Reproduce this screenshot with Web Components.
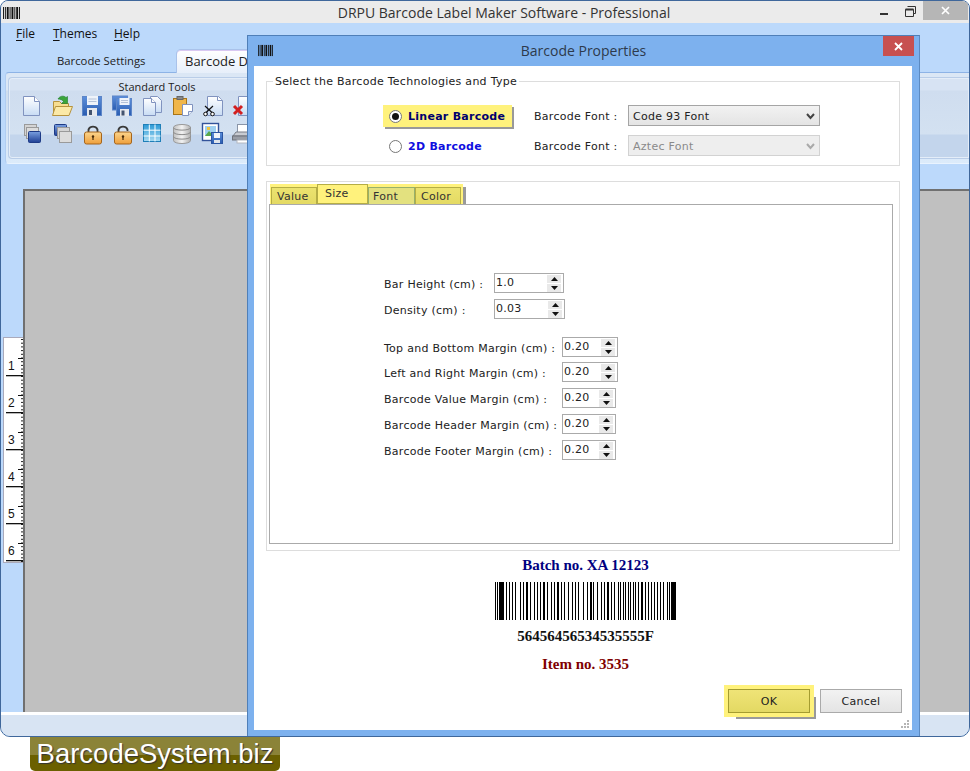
<!DOCTYPE html>
<html lang="en"><head><meta charset="utf-8"><title>DRPU Barcode Label Maker Software</title>
<style>html,body{margin:0;padding:0;background:#fff}body{width:970px;height:771px;overflow:hidden;font-family:"DejaVu Sans",sans-serif}</style>
</head><body>
<app-window>
  <menu-bar></menu-bar>
  <tab-row></tab-row>
  <tool-ribbon></tool-ribbon>
  <work-area></work-area>
  <prop-dialog>
    <group-box slot="top" legend="Select the Barcode Technologies and Type"><tech-picker></tech-picker></group-box>
    <size-tabs slot="tabs">
      <spin-row label="Bar Height (cm) :" value="1.0" lw="110" w="70"></spin-row>
      <spin-row label="Density (cm) :" value="0.03" lw="110" w="71"></spin-row>
      <spin-row label="Top and Bottom Margin (cm) :" value="0.20" lw="178" w="56" style="margin-top:12px"></spin-row>
      <spin-row label="Left and Right Margin (cm) :" value="0.20" lw="178" w="56" style="margin-top:-1px"></spin-row>
      <spin-row label="Barcode Value Margin (cm) :" value="0.20" lw="178" w="54"></spin-row>
      <spin-row label="Barcode Header Margin (cm) :" value="0.20" lw="178" w="54"></spin-row>
      <spin-row label="Barcode Footer Margin (cm) :" value="0.20" lw="178" w="54"></spin-row>
    </size-tabs>
    <barcode-preview slot="preview"></barcode-preview>
  </prop-dialog>
</app-window>
<water-mark>BarcodeSystem.biz</water-mark>
<script>
const barLogo=(w,h)=>{const b=[[0,1],[2,1],[4,2],[7,1],[9,2],[12,1],[14,2],[17,1]];return `<svg width="${w}" height="${h}" viewBox="0 0 18 14" preserveAspectRatio="none" style="display:block">${b.map(a=>`<rect x="${a[0]}" y="1" width="${a[1]}" height="12" fill="#111"/>`).join('')}</svg>`};
function def(name,html,init){customElements.define(name,class extends HTMLElement{constructor(){super();const s=this.attachShadow({mode:'open'});s.innerHTML=typeof html==='function'?html(this):html;}connectedCallback(){if(init&&!this._i){this._i=1;init(this)}}})}

def('app-window',`<style>
:host{display:block;position:relative;box-sizing:border-box;width:970px;height:737px;border:1px solid #3f679b;border-radius:8px 8px 10px 10px;background:#bcd9fb;overflow:hidden}
.title{height:22px;background:#ebebeb;display:flex;align-items:center;position:relative;font:14px/20px "Open Sans",sans-serif;color:#333;justify-content:center;padding:2px 0 0 38px;box-sizing:border-box}
.logo{position:absolute;left:2px;top:5px}
.ctl{position:absolute;right:0;top:0;display:flex;height:19px;align-items:flex-start}
.ctl i{display:block;position:relative}
.min{width:8px;height:2px;background:#333;position:absolute!important;left:-43px;top:12px}
.res{position:absolute!important;left:-18px;top:5px}
.x{width:45px;height:19px;background:#b6b6b6;margin-right:1px;display:flex!important;align-items:center;justify-content:center}
</style>
<div class="title"><span class="logo">${barLogo(17,14)}</span>DRPU Barcode Label Maker Software - Professional
<div class="ctl"><i class="min"></i><i class="res"><svg width="11" height="11" style="display:block"><path d="M2.5 .5h8v7h-2M.5 3.5h8v7h-8z" fill="none" stroke="#333"/><path d="M.5 3.5h8" stroke="#333" stroke-width="2"/></svg></i><i class="x"><svg width="9" height="9"><path d="M1 1l7 7M8 1l-7 7" stroke="#fff" stroke-width="1.7"/></svg></i></div></div>
<slot></slot>`);

def('menu-bar',`<style>
:host{display:flex;height:26px;align-items:center;font:12px "Open Sans",sans-serif;color:#111;padding:0 0 6px 15px;box-sizing:border-box}
span{display:block}u{text-decoration:underline;text-underline-offset:2px}
</style><span style="width:37px"><u>F</u>ile</span><span style="width:61px"><u>T</u>hemes</span><span><u>H</u>elp</span>`);

def('tab-row',`<style>
:host{display:flex;height:24px;font:11.300px "Open Sans",sans-serif;color:#222;box-sizing:border-box;padding-left:56px;align-items:flex-end;position:relative;margin-bottom:-1px}
.a{width:119px;height:22px;line-height:20px}
.b{height:24px;width:200px;box-sizing:border-box;border:1px solid #a9c2ea;border-bottom:0;border-radius:5px 5px 0 0;background:linear-gradient(#fff,#e7effa);padding-left:8px;line-height:23px;font-size:13px;white-space:nowrap;box-shadow:inset 0 1px #d9c8f2}
</style><span class="a">Barcode Settings</span><span class="b">Barcode Designing</span>`);

const lockBody=`<rect x=".5" y="8.500" width="17" height="12" rx="2" fill="url(#o)" stroke="#a5651c"/><circle cx="9" cy="13" r="1.200" fill="#4a2c08"/><path d="M9 13v3.500" stroke="#4a2c08" stroke-width="1.200"/>`;
const ico={
doc:`<path d="M1.5 1.5h11l5 5v14h-16z" fill="url(#w)" stroke="#8093bf"/><path d="M12.5 1.5v5h5" fill="#fff" stroke="#8093bf"/>`,
open:`<path d="M1.5 19V6.500h6l2 2h7v4" fill="#f7dd90" stroke="#b6933d"/><path d="M.5 20.500l3-9h17l-3.500 9z" fill="#fbe9a7" stroke="#b6933d"/><path d="M6 4c2-3.500 6-3.500 8-1.500l1.500-1v7h-6l2-2c-1-1.500-3-2.500-5.500-2.500z" fill="#3aa53a" stroke="#1e7a2c" stroke-width=".6"/>`,
save:`<rect x=".5" y="1.500" width="19" height="19" fill="url(#b)" stroke="#5d86c8"/><rect x="5" y="1" width="11" height="9" fill="#eef3fa"/><path d="M6.500 4h8M6.500 6.500h8" stroke="#b4c2d8"/><rect x="5" y="13" width="10" height="8" fill="#e6e9ee"/><rect x="7" y="15" width="3" height="5" fill="#44546f"/>`,
saveall:`<rect x=".5" y="1" width="15" height="14" fill="url(#b)" stroke="#5d86c8"/><rect x="4.500" y="3.500" width="15" height="17" fill="url(#b)" stroke="#5d86c8"/><rect x="7.500" y="3" width="10" height="7" fill="#eef3fa"/><path d="M9 5.500h7M9 7.500h7" stroke="#b4c2d8"/><rect x="8" y="14" width="9" height="7" fill="#e6e9ee"/><rect x="9.500" y="15.500" width="3" height="5" fill="#44546f"/>`,
copy:`<path d="M8.500 1.500h7l4 4v12h-11z" fill="url(#w)" stroke="#8093bf"/><path d="M1.500 3.500h8l4 4v13h-12z" fill="url(#w)" stroke="#8093bf"/><path d="M9.500 3.500v4h4" fill="#fff" stroke="#8093bf"/>`,
paste:`<rect x="1.500" y="3.500" width="13" height="16" fill="#f0b64a" stroke="#a77418"/><rect x="5" y="1.500" width="6" height="3" fill="#8a8a8a" stroke="#666"/><path d="M10.500 9.500h10v7l-4 4h-6z" fill="#fff" stroke="#8093bf"/><path d="M16.500 20.500v-4h4" fill="#e4ebf5" stroke="#8093bf"/>`,
cut:`<path d="M5.500 1.500h11l4 4v15h-15z" fill="url(#w)" stroke="#8093bf"/><path d="M15.500 1.500v4h5" fill="#fff" stroke="#8093bf"/><path d="M3 11l7.500 7M11 11l-7.500 7" stroke="#111" stroke-width="1.200"/><circle cx="3.500" cy="19" r="1.800" fill="#fff" stroke="#111"/><circle cx="10.500" cy="19" r="1.800" fill="#fff" stroke="#111"/>`,
del:`<path d="M6.500 1.500h13v19h-13z" fill="url(#w)" stroke="#8093bf"/><path d="M2 11l8 8M10 11l-8 8" stroke="#d21f1f" stroke-width="3"/>`,
front:`<rect x="2.500" y="1.500" width="12" height="11" fill="#d4d4d4" stroke="#9a9a9a"/><rect x="4.500" y="4.500" width="12" height="11" fill="#dcdcdc" stroke="#9a9a9a"/><rect x="6.500" y="8.500" width="12" height="11" rx="1" fill="url(#b2)" stroke="#1d3a86"/>`,
back:`<rect x="2.500" y="1.500" width="12" height="11" rx="1" fill="url(#b2)" stroke="#1d3a86"/><rect x="5.500" y="4.500" width="12" height="11" fill="#d4d4d4" stroke="#9a9a9a"/><rect x="7.500" y="8.500" width="12" height="11" fill="#dcdcdc" stroke="#9a9a9a"/>`,
lock:`<g transform="translate(2 .5)"><path d="M4.500 9V6a5 5 0 0 1 9 0v3" fill="none" stroke="#3a3a3a" stroke-width="1.800"/>${lockBody}</g>`,
unlock:`<g transform="translate(2 .5)"><path d="M4.500 9V6a5 5 0 0 1 9 0v1.500" fill="none" stroke="#3a3a3a" stroke-width="1.800"/>${lockBody}</g>`,
grid:`<rect x="1.500" y="1.500" width="17" height="17" fill="url(#g)" stroke="#1f7fb8"/><path d="M7.300 1.500v17M13 1.500v17M1.500 7.200h17M1.500 13h17" stroke="#fff"/>`,
db:`<path d="M1.500 4.500c0-4 17-4 17 0v13c0 4-17 4-17 0z" fill="url(#s)" stroke="#999"/><path d="M1.500 4.500c0 3.500 17 3.500 17 0M1.500 9c0 3.500 17 3.500 17 0M1.500 13.500c0 3.500 17 3.500 17 0" fill="none" stroke="#8c8c8c"/>`,
pic:`<rect x=".5" y=".5" width="16" height="17" fill="#fff" stroke="#33539a" stroke-width="1.400"/><rect x="3" y="3" width="11" height="10" fill="#9fd0f0"/><path d="M3 13l4-5 3 3 2-2 2 4z" fill="#5aa84a"/><rect x="5" y="4" width="3" height="3" fill="#f2c53d"/><rect x="9.500" y="9.500" width="11" height="11" fill="url(#b)" stroke="#2a55a2"/><rect x="12" y="10" width="6" height="5" fill="#eef3fa"/><rect x="12" y="17" width="6" height="3" fill="#dfe4ea"/>`,
print:`<rect x="5.500" y="1.500" width="12" height="8" fill="#fff" stroke="#8a95a8"/><path d="M1 13l3-4h16v4z" fill="#c9ccd2" stroke="#7a7f88"/><rect x=".5" y="13" width="21" height="4" fill="#9a9ea6" stroke="#6f737b"/><rect x="5" y="17" width="13" height="3" fill="#fff" stroke="#b4b8c0"/>`
};
const defs=`<defs><linearGradient id="w" x1="0" y1="0" x2="0" y2="1"><stop offset="0" stop-color="#fff"/><stop offset="1" stop-color="#c8dcf4"/></linearGradient><linearGradient id="b" x1="0" y1="0" x2="0" y2="1"><stop offset="0" stop-color="#5c8fdb"/><stop offset="1" stop-color="#2a5cb0"/></linearGradient><linearGradient id="b2" x1="0" y1="0" x2="0" y2="1"><stop offset="0" stop-color="#7aa0e0"/><stop offset="1" stop-color="#1f3f94"/></linearGradient><linearGradient id="o" x1="0" y1="0" x2="0" y2="1"><stop offset="0" stop-color="#fbd58d"/><stop offset="1" stop-color="#ef9f3a"/></linearGradient><linearGradient id="g" x1="0" y1="0" x2="0" y2="1"><stop offset="0" stop-color="#2d9ad6"/><stop offset="1" stop-color="#a8daf2"/></linearGradient><linearGradient id="s" x1="0" y1="0" x2="1" y2="0"><stop offset="0" stop-color="#c0c0c0"/><stop offset=".5" stop-color="#f2f2f2"/><stop offset="1" stop-color="#b0b0b0"/></linearGradient></defs>`;
def('tool-icon',el=>`<style>:host{display:block;width:22px;height:22px}svg{display:block;overflow:visible}</style><svg width="22" height="22" viewBox="0 0 22 22">${defs}${ico[el.getAttribute('name')]||''}</svg>`);

def('tool-ribbon',`<style>
:host{display:block;box-sizing:border-box;height:92px;margin-left:4px;border-top:1px solid #8db3e6;border-left:1px solid #b0cdf2;border-bottom:1px solid #e9f3fe;border-radius:4px 0 0 4px;background:linear-gradient(#dbe7f5 0,#dbe7f5 17px,#cfdeee 18px,#d6e5f5 60px,#dcebfa 100%);padding:4px 0 3px 2px}
.g{height:82px;box-sizing:border-box;border:1px solid #b9cde8;border-right:0;border-radius:4px 0 0 4px;box-shadow:inset 0 0 0 1px #e4edf8;position:relative;background:linear-gradient(#d7e3f3 0,#d7e3f3 12px,#cfddef 13px,#d3e1f1 56px,#c3d5ec 57px,#c3d5ec 100%);}
.t{font:11px/14px "Open Sans",sans-serif;color:#222;text-align:center;width:296px;padding-top:2px;height:15px}
.i{display:grid;grid-template-columns:repeat(8,30px);grid-auto-rows:22px;row-gap:6px;margin-left:13px;width:240px}
</style><div class="g"><div class="t">Standard Tools</div><div class="i">
${['doc','open','save','saveall','copy','paste','cut','del','front','back','lock','unlock','grid','db','pic','print'].map(n=>`<tool-icon name="${n}"></tool-icon>`).join('')}
</div></div>`);

def('work-area',()=>{let t='';for(let i=0;i<61;i++){const y=1+i*3.7;if(y>224)break;t+=`<rect x="17" y="${y.toFixed(1)}" width="3" height="1" fill="#222"/>`}
let n='';for(let k=1;k<=6;k++){const y=37*k;n+=`<rect x="2" y="${y}" width="18" height="1.300" fill="#111"/><rect x="14" y="${y-17}" width="6" height="1" fill="#111"/><text x="4" y="${y-5}" font-family="Liberation Sans" font-size="12" fill="#111">${k}</text>`}
return `<style>
:host{display:flex;flex-direction:column;height:573px;margin-top:0}
.m{display:flex;flex:1;padding-top:25px}
.r{width:22px;padding-left:2px;padding-top:148px;box-sizing:border-box}
.rr{width:20px;height:226px;box-sizing:border-box;border:1px solid #aab;border-right:0;background:#fff}
.c{flex:1;background:#c0c0c0;border-top:2px solid #707070;border-left:2px solid #707070}
.s{height:3px;background:#fff}.f{height:22px;background:#d8e4f3}
svg{display:block}
</style><div class="m"><div class="r"><div class="rr"><svg width="20" height="224">${t}${n}</svg></div></div><div class="c"></div></div><div class="s"></div><div class="f"></div>`});

def('prop-dialog',`<style>
:host{display:block;position:absolute;left:246px;top:34px;width:673px;height:702px;box-sizing:border-box;border:1px solid #4f7fb8;border-right-color:#5b8ac2;background:#7db1ee;padding:30px 7px 6px 6px}
.h{position:absolute;left:0;right:0;top:0;height:30px;font:14px/30px "Open Sans",sans-serif;color:#2d3a4c;text-align:center;box-sizing:border-box}
.lg{position:absolute;left:10px;top:8px}
.cl{position:absolute;right:5px;top:0;width:31px;height:20px;background:#c75050;display:flex;align-items:center;justify-content:center}
.b{background:#fff;height:100%;box-sizing:border-box;padding:15px 12px 0;position:relative;display:flex;flex-direction:column}
.foot{display:flex;justify-content:flex-end;gap:10px;margin-top:14px;margin-right:-2px}
.ok,.cn{display:block;box-sizing:border-box;width:82px;height:24px;font:11px/23px "DejaVu Sans",sans-serif;letter-spacing:.27px;text-align:center;color:#222}
.ok{border:1px solid #a49c30;background:linear-gradient(#efe477,#e3d963);outline:4px solid #fff27c;box-shadow:7px 7px 0 -1px #9a9a9a}
.cn{border:1px solid #aaa;background:linear-gradient(#f2f2f2,#e4e4e4)}
.grip{position:absolute;right:2px;bottom:2px}
</style>
<div class="h"><span class="lg">${barLogo(15,13)}</span>Barcode Properties<span class="cl"><svg width="9" height="9"><path d="M1 1l7 7M8 1l-7 7" stroke="#fff" stroke-width="1.800"/></svg></span></div>
<div class="b"><slot name="top"></slot><slot name="tabs"></slot><slot name="preview"></slot>
<div class="foot"><span class="ok">OK</span><span class="cn">Cancel</span></div>
<svg class="grip" width="9" height="8"><g fill="#b5b5b5"><rect x="6" y="0" width="2" height="2"/><rect x="3" y="3" width="2" height="2"/><rect x="6" y="3" width="2" height="2"/><rect x="0" y="6" width="2" height="2"/><rect x="3" y="6" width="2" height="2"/><rect x="6" y="6" width="2" height="2"/></g></svg></div>`);

def('group-box',el=>`<style>
:host{display:block;box-sizing:border-box;height:85px;border:1px solid #ddd;position:relative;font:11px "DejaVu Sans",sans-serif;letter-spacing:.27px;color:#222}
.l{position:absolute;left:6px;top:-7px;background:#fff;padding:0 2px;line-height:13px;white-space:nowrap}
</style><span class="l">${el.getAttribute('legend')}</span><slot></slot>`);

def('tech-picker',`<style>
:host{display:grid;grid-template-columns:151px 94px 192px;grid-auto-rows:21px;row-gap:9px;margin:23px 0 0 116px;align-items:center;font:11px "DejaVu Sans",sans-serif;letter-spacing:.27px;color:#222}
span.t{padding-top:2px}
.h{display:flex;align-items:center;height:22px;width:129px;background:#fff27c;box-shadow:2px 2px 0 #999;gap:6px;padding:2px 0 0 6px;box-sizing:border-box;font-weight:bold;color:#00006e}
.n{display:flex;align-items:center;gap:6px;padding:2px 0 0 6px;font-weight:bold;color:#0f0fe0}
.r{width:13px;height:13px;box-sizing:border-box;border:1px solid #777;border-radius:50%;background:#fff;flex:none;display:flex;align-items:center;justify-content:center}
.r i{display:block;width:7px;height:7px;background:#111;border-radius:50%}
.s{height:21px;box-sizing:border-box;border:1px solid #a5a5a5;background:linear-gradient(#f2f2f2,#e4e4e4);display:flex;align-items:center;justify-content:space-between;padding:2px 4px 0;color:#222}
.d{border-color:#d2d2d2;background:#eee;color:#8a8a8a}
svg{display:block}
</style>
<div class="h"><span class="r"><i></i></span>Linear Barcode</div><span class="t">Barcode Font :</span>
<div class="s">Code 93 Font<svg width="9" height="7"><path d="M1 1l3.500 4L8 1" fill="none" stroke="#444" stroke-width="2"/></svg></div>
<div class="n"><span class="r"></span>2D Barcode</div><span class="t">Barcode Font :</span>
<div class="s d">Aztec Font<svg width="9" height="7"><path d="M1 1l3.500 4L8 1" fill="none" stroke="#aaa" stroke-width="2"/></svg></div>`);

def('size-tabs',`<style>
:host{display:block;box-sizing:border-box;height:370px;margin-top:15px;border:1px solid #ddd;padding:2px 6px 6px 2px;font:11px "DejaVu Sans",sans-serif;letter-spacing:.27px;color:#222}
.st{display:flex;height:21px;box-sizing:border-box;width:193px;margin-left:1px;background:#fff27c;box-shadow:3px 3px 0 #9a9a9a;padding:0 2px 0 1px;align-items:flex-end}
.t{box-sizing:border-box;height:18px;border:1px solid #b5ad45;background:linear-gradient(#ece36f,#e4da64);line-height:17px;padding-left:5px;color:#333}
.a{height:20px;align-self:flex-start;background:#fff27c;padding-left:7px;line-height:17px}
.f{background:#e3e17f;border-color:#97b06c}
.p{position:relative;box-sizing:border-box;height:340px;margin-top:-1px;border:1px solid #aaa;background:#fff;padding:68px 0 0 114px;display:flex;flex-direction:column;gap:6px}
</style>
<div class="st"><span class="t" style="width:46px">Value</span><span class="t a" style="width:51px">Size</span><span class="t f" style="width:47px;padding-left:4px">Font</span><span class="t" style="width:46px">Color</span></div>
<div class="p"><slot></slot></div>`);

def('spin-row',el=>`<style>
:host{display:flex;height:20px;align-items:center;font:11px "DejaVu Sans",sans-serif;letter-spacing:.27px;color:#222}
.l{display:block;width:${el.getAttribute('lw')}px;white-space:nowrap;flex:none;padding-top:2px}
.s{position:relative;box-sizing:border-box;display:block;width:${el.getAttribute('w')}px;height:20px;border:1px solid #aaa;background:#fff;line-height:18px;padding-left:1px}
.s b{position:absolute;right:2px;width:14px;height:8px;background:#e9e9e9;display:flex;align-items:center;justify-content:center}
.u{top:1px}.d{top:10px}svg{display:block}
</style><span class="l">${el.getAttribute('label')}</span><span class="s">${el.getAttribute('value')}<b class="u"><svg width="7" height="4"><path d="M3.500 0L7 4H0z" fill="#111"/></svg></b><b class="d"><svg width="7" height="4"><path d="M0 0h7L3.500 4z" fill="#111"/></svg></b></span>`);

def('barcode-preview',()=>{
const bars=[[0,1],[2,1],[4,5],[11,1],[14,1],[17,1],[20,1],[25,1],[28,1],[31,2],[35,1],[39,1],[42,1],[45,1],[48,2],[52,1],[56,1],[59,1],[62,2],[66,1],[69,1],[73,1],[77,1],[80,1],[83,1],[88,1],[92,1],[95,2],[98,1],[102,1],[106,1],[109,1],[112,2],[116,1],[119,1],[123,1],[125,1],[128,1],[130,1],[133,1],[135,1],[138,1],[140,1],[143,1],[146,2],[150,1],[153,1],[156,1],[159,1],[162,1],[165,1],[168,1],[172,1],[174,1],[176,5]];
return `<style>
:host{display:flex;flex-direction:column;align-items:center;font:bold 15px "Liberation Serif",serif;margin-top:4px;padding-left:5px}
.a{color:#000080;height:20px;line-height:20px}.v{color:#111;height:22px;line-height:22px;margin-top:1px}.c{color:#800000;height:22px;line-height:22px;margin-top:6px}
svg{display:block;margin-top:7px;margin-bottom:4px}
</style><span class="a">Batch no. XA 12123</span>
<svg width="181" height="38">${bars.map(b=>`<rect x="${b[0]}" width="${b[1]}" height="38" fill="#000"/>`).join('')}</svg>
<span class="v">56456456534535555F</span><span class="c">Item no. 3535</span>`});

def('water-mark',`<style>
:host{display:block;box-sizing:border-box;width:250px;height:34px;margin-left:30px;border-radius:0 0 5px 5px;background:linear-gradient(#8b8338 0,#8b8338 53%,#6b6000 53%,#6b6000 100%);color:#fff;font:27.500px/33px "Liberation Sans",sans-serif;text-align:center;text-shadow:1px 1px 1px #333;white-space:nowrap}
</style><slot></slot>`);
</script>
</body></html>
